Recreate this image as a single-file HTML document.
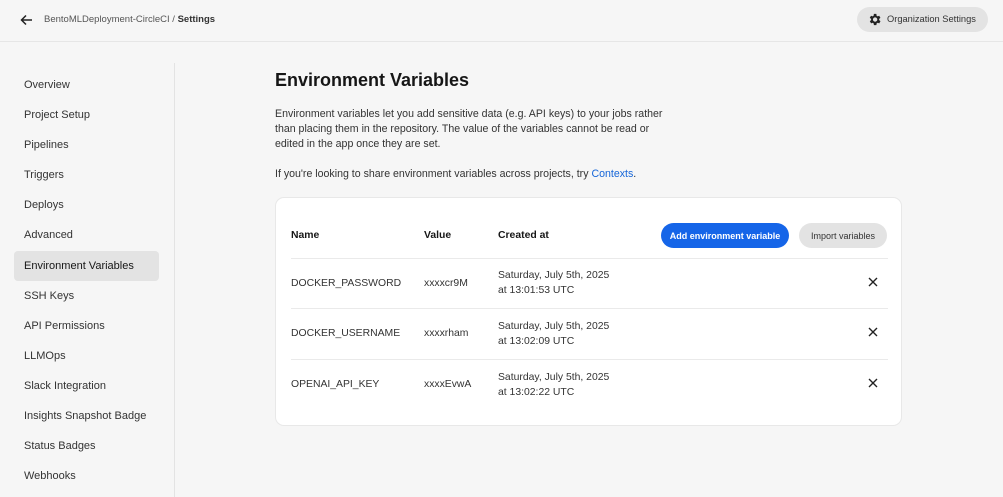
<!DOCTYPE html>
<html><head><style>
*{box-sizing:border-box;margin:0;padding:0}
body{width:1003px;height:497px;overflow:hidden;background:#f6f6f6;font-family:"Liberation Sans",sans-serif;color:#161616;position:relative}
.top{position:absolute;left:0;top:0;width:1003px;height:42px;border-bottom:1px solid #e6e6e6}
.crumb{position:absolute;left:44px;top:14px;font-size:9.5px;color:#555}
.crumb b{color:#333}
.org{position:absolute;left:857px;top:7px;width:131px;height:25px;border-radius:13px;background:#e3e3e3;font-size:9.3px;color:#333;padding:7px 0 0 30px}
.side{position:absolute;left:0;top:63px;width:175px;height:434px;border-right:1px solid #e3e3e3}
.side div{position:absolute;left:14px;width:145px;height:30px;font-size:11px;color:#333;padding:9px 0 0 10px;border-radius:4px}
.side .act{background:#e3e3e3;color:#161616}
h1{position:absolute;left:275px;top:70px;font-size:18px;font-weight:bold}
p{position:absolute;left:275px;font-size:10.6px;color:#333;line-height:15px;width:396px}
.card{position:absolute;left:275px;top:197px;width:627px;height:229px;background:#fff;border:1px solid #e8e8e8;border-radius:9px}
.t{position:absolute;font-size:10.4px;color:#333;line-height:14.5px}
.h{font-weight:bold;color:#161616}
.line{position:absolute;left:15px;width:597px;height:1px;background:#eaeaea}
.btn{position:absolute;top:25px;height:25px;border-radius:13px;font-size:9px;padding-top:8px;text-align:center}
.x{position:absolute;left:592px}
</style></head><body>
<div class="top">
<svg style="position:absolute;left:20px;top:14px" width="13" height="12" viewBox="0 0 13 12"><path d="M12 6H2M6 1.5L1.5 6 6 10.5" stroke="#222" stroke-width="1.5" fill="none"/></svg>
<div class="crumb">BentoMLDeployment-CircleCI / <b>Settings</b></div>
<div class="org"><svg style="position:absolute;left:10px;top:5px" width="15" height="15" viewBox="0 0 24 24"><path fill="#222" d="M19.4 13a7.5 7.5 0 000-2l2.1-1.6-2-3.5-2.5 1a7 7 0 00-1.7-1L15 3h-4l-.4 2.9a7 7 0 00-1.7 1l-2.5-1-2 3.5L6.6 11a7.5 7.5 0 000 2l-2.1 1.6 2 3.5 2.5-1a7 7 0 001.7 1L11 21h4l.4-2.9a7 7 0 001.7-1l2.5 1 2-3.5zM13 15.5a3.5 3.5 0 110-7 3.5 3.5 0 010 7z"/></svg>Organization Settings</div>
</div>
<div class="side">
<div style="top:7px">Overview</div><div style="top:37px">Project Setup</div><div style="top:67px">Pipelines</div><div style="top:97px">Triggers</div><div style="top:127px">Deploys</div><div style="top:157px">Advanced</div><div class="act" style="top:188px">Environment Variables</div><div style="top:218px">SSH Keys</div><div style="top:248px">API Permissions</div><div style="top:278px">LLMOps</div><div style="top:308px">Slack Integration</div><div style="top:338px">Insights Snapshot Badge</div><div style="top:368px">Status Badges</div><div style="top:398px">Webhooks</div>
</div>
<h1>Environment Variables</h1>
<p style="top:107px">Environment variables let you add sensitive data (e.g. API keys) to your jobs rather than placing them in the repository. The value of the variables cannot be read or edited in the app once they are set.</p>
<p style="top:167px;width:500px">If you're looking to share environment variables across projects, try <span style="color:#1565d8">Contexts</span>.</p>
<div class="card">
<div class="t h" style="left:15px;top:31px">Name</div><div class="t h" style="left:148px;top:31px">Value</div><div class="t h" style="left:222px;top:31px">Created at</div>
<div class="btn" style="left:385px;width:128px;background:#1565e8;color:#fff;font-weight:bold">Add environment variable</div>
<div class="btn" style="left:523px;width:88px;background:#e3e3e3;color:#333">Import variables</div>
<div class="line" style="top:60px"></div>
<div class="t" style="left:15px;top:79px">DOCKER_PASSWORD</div><div class="t" style="left:148px;top:79px">xxxxcr9M</div><div class="t" style="left:222px;top:71px">Saturday, July 5th, 2025<br>at 13:01:53 UTC</div>
<svg class="x" style="top:79px" width="10" height="10" viewBox="0 0 10 10"><path d="M1 1L9 9M9 1L1 9" stroke="#222" stroke-width="1.4"/></svg>
<div class="line" style="top:110px"></div>
<div class="t" style="left:15px;top:129px">DOCKER_USERNAME</div><div class="t" style="left:148px;top:129px">xxxxrham</div><div class="t" style="left:222px;top:122px">Saturday, July 5th, 2025<br>at 13:02:09 UTC</div>
<svg class="x" style="top:129px" width="10" height="10" viewBox="0 0 10 10"><path d="M1 1L9 9M9 1L1 9" stroke="#222" stroke-width="1.4"/></svg>
<div class="line" style="top:161px"></div>
<div class="t" style="left:15px;top:180px">OPENAI_API_KEY</div><div class="t" style="left:148px;top:180px">xxxxEvwA</div><div class="t" style="left:222px;top:173px">Saturday, July 5th, 2025<br>at 13:02:22 UTC</div>
<svg class="x" style="top:180px" width="10" height="10" viewBox="0 0 10 10"><path d="M1 1L9 9M9 1L1 9" stroke="#222" stroke-width="1.4"/></svg>
</div>
</body></html>
